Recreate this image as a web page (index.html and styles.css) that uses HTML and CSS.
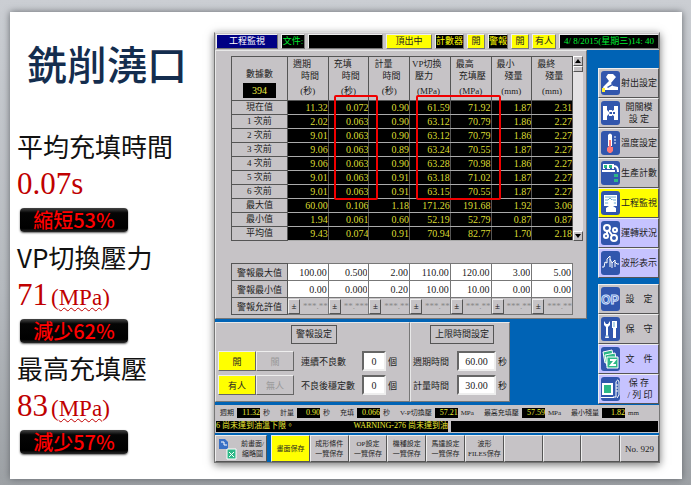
FILE: index.html
```
<!DOCTYPE html>
<html lang="zh-Hant">
<head>
<meta charset="utf-8">
<title>銑削澆口</title>
<link rel="stylesheet" href="styles.css">
</head>
<body>
<main class="slide">
  <section class="summary">
    <h1>銑削澆口</h1>
    <h2>平均充填時間</h2>
    <p class="value">0.07s</p>
    <p class="pill">縮短53%</p>
    <h2>VP切換壓力</h2>
    <p class="value">71<small>(<span class="wavy">MPa</span>)</small></p>
    <p class="pill">減少62%</p>
    <h2>最高充填壓</h2>
    <p class="value">83<small>(<span class="wavy">MPa</span>)</small></p>
    <p class="pill">減少57%</p>
  </section>

  <section class="screen">
    <header class="topbar">
      <span class="navy">工程監視</span>
      <span class="file">文件:</span>
      <span class="file-name"></span>
      <span class="lit eject">頂出中</span>
      <span class="dark counter">計數器</span>
      <span class="lit">開</span>
      <span class="dark">警報</span>
      <span class="lit">開</span>
      <span class="lit manned">有人</span>
      <time class="clock">4/ 8/2015(星期三)14: 40</time>
    </header>

    <div class="middle">
      <div class="work">
        <div class="panel monitor">
          <div class="data">
            <div class="table-wrap">
              <table class="log">
                <thead>
                  <tr>
                    <th class="first">數據數<b>394</b></th>
                    <th>週期<i>時間</i><em>(秒)</em></th>
                    <th>充填<i>時間</i><em>(秒)</em></th>
                    <th>計量<i>時間</i><em>(秒)</em></th>
                    <th>VP切換<i>壓力</i><em>(MPa)</em></th>
                    <th>最高<i>充填壓</i><em>(MPa)</em></th>
                    <th>最小<i>殘量</i><em>(mm)</em></th>
                    <th>最終<i>殘量</i><em>(mm)</em></th>
                  </tr>
                </thead>
                <tbody>
                  <tr><th>現在值</th><td>11.32</td><td>0.072</td><td>0.90</td><td>61.59</td><td>71.92</td><td>1.87</td><td>2.31</td></tr>
                  <tr><th>1 次前</th><td>2.02</td><td>0.063</td><td>0.90</td><td>63.12</td><td>70.79</td><td>1.86</td><td>2.27</td></tr>
                  <tr><th>2 次前</th><td>9.01</td><td>0.063</td><td>0.90</td><td>63.12</td><td>70.79</td><td>1.86</td><td>2.27</td></tr>
                  <tr><th>3 次前</th><td>9.06</td><td>0.063</td><td>0.89</td><td>63.24</td><td>70.55</td><td>1.87</td><td>2.27</td></tr>
                  <tr><th>4 次前</th><td>9.06</td><td>0.063</td><td>0.90</td><td>63.28</td><td>70.98</td><td>1.86</td><td>2.27</td></tr>
                  <tr><th>5 次前</th><td>9.01</td><td>0.063</td><td>0.91</td><td>63.18</td><td>71.02</td><td>1.87</td><td>2.27</td></tr>
                  <tr><th>6 次前</th><td>9.01</td><td>0.063</td><td>0.91</td><td>63.15</td><td>70.55</td><td>1.87</td><td>2.27</td></tr>
                  <tr><th>最大值</th><td>60.00</td><td>0.106</td><td>1.18</td><td>171.26</td><td>191.68</td><td>1.92</td><td>3.06</td></tr>
                  <tr><th>最小值</th><td>1.94</td><td>0.061</td><td>0.60</td><td>52.19</td><td>52.79</td><td>0.87</td><td>0.87</td></tr>
                  <tr><th>平均值</th><td>9.43</td><td>0.074</td><td>0.91</td><td>70.94</td><td>82.77</td><td>1.70</td><td>2.18</td></tr>
                </tbody>
              </table>
              <div class="mark mark-time"></div>
              <div class="mark mark-pressure"></div>
            </div>
            <div class="scroll">
              <button aria-label="上"><svg viewBox="0 0 8 8"><path d="M4 2 7 6H1z"/></svg></button>
              <span class="thumb"></span>
              <button class="down" aria-label="下"><svg viewBox="0 0 8 8"><path d="M4 6 7 2H1z"/></svg></button>
            </div>
          </div>
          <table class="limits">
            <tr><th>警報最大值</th>
              <td><input aria-label="週期最大" value="100.00"></td><td><input aria-label="充填最大" value="0.500"></td><td><input aria-label="計量最大" value="2.00"></td><td><input aria-label="切換最大" value="110.00"></td><td><input aria-label="充填壓最大" value="120.00"></td><td><input aria-label="最小殘量最大" value="3.00"></td><td><input aria-label="最終殘量最大" value="5.00"></td></tr>
            <tr><th>警報最小值</th>
              <td><input aria-label="週期最小" value="0.00"></td><td><input aria-label="充填最小" value="0.000"></td><td><input aria-label="計量最小" value="0.20"></td><td><input aria-label="切換最小" value="10.00"></td><td><input aria-label="充填壓最小" value="10.00"></td><td><input aria-label="最小殘量最小" value="0.00"></td><td><input aria-label="最終殘量最小" value="0.00"></td></tr>
            <tr class="allow"><th>警報允許值</th>
              <td><div><button>±</button><span>***.**</span></div></td><td><div><button>±</button><span>**.***</span></div></td><td><div><button>±</button><span>***.**</span></div></td><td><div><button>±</button><span>***.**</span></div></td><td><div><button>±</button><span>***.**</span></div></td><td><div><button>±</button><span>***.**</span></div></td><td><div><button>±</button><span>***.**</span></div></td></tr>
          </table>
        </div>

        <div class="settings">
          <fieldset class="panel alarm">
            <legend>警報設定</legend>
            <div class="row">
              <button class="key on">開</button><button class="key">關</button>
              <label for="bad">連續不良數</label><input id="bad" value="0"><span>個</span>
            </div>
            <div class="row">
              <button class="key on">有人</button><button class="key">無人</button>
              <label for="stable">不良後穩定數</label><input id="stable" value="0"><span>個</span>
            </div>
          </fieldset>
          <fieldset class="panel limit-time">
            <legend>上限時間設定</legend>
            <div class="row"><label for="cycle">週期時間</label><input id="cycle" value="60.00"><span>秒</span></div>
            <div class="row"><label for="meter">計量時間</label><input id="meter" value="30.00"><span>秒</span></div>
          </fieldset>
        </div>
      </div>

      <nav class="side">
        <button><svg viewBox="0 0 19 24"><path class="w" d="M7 3h5l3 3-5 6 2 3 5 1v3H3l-1-3 6-6-3-4z"/><path class="bl" d="M6 16l5-3 1 1-5 3z"/><path class="y" d="M1 17h3v4H1z"/></svg><span>射出設定</span></button>
        <button><svg viewBox="0 0 19 24"><path class="w" d="M2 5h4v4l3 3-3 3v4H2zM17 5h-4v4l-2 1v4l2 1v4h4z"/><path class="lw" d="M8 10h3M8 14h3"/><path class="bl" d="M12 11h2v2h-2z"/></svg><span>開關模<br>設 定</span></button>
        <button><svg viewBox="0 0 19 24"><path class="w" d="M7 4q2-3 4 0v11H7z"/><path class="r" d="M8 9h2v7h2v4l-2 2H8l-2-2v-3l2-2z"/><path class="thin" d="M13 6h2M13 9h2M13 12h2"/></svg><span>溫度設定</span></button>
        <button><svg viewBox="0 0 19 24"><path class="lw" d="M1 10h13M3 8V4h4v4M8 8V4h4v4M13 5q4 0 4 6"/><path class="g" d="M3 4h3v3H3zM8 4h3v3H8zM13 13h4v3h-4zM13 18h4v3h-4z"/></svg><span>生產計數</span></button>
        <button class="yellow"><svg viewBox="0 0 19 24"><path class="w" d="M3 4h13v11H3z"/><path class="lb" d="M4 6h11M4 9h3l2-2 2 2h4M4 12h11"/><path class="w" d="M8 9h4l1 3-1 3 3 2v4H5v-4l3-2-1-3z"/></svg><span>工程監視</span></button>
        <button class="lilac"><svg viewBox="0 0 19 24"><circle class="ring" cx="6" cy="7" r="3"/><circle class="ring" cx="14" cy="9" r="2"/><circle class="ring" cx="5" cy="15" r="2"/><circle class="ring" cx="13" cy="17" r="3"/><path class="lw" d="M8 10l3 4M6 10v3"/></svg><span>運轉狀況</span></button>
        <button class="lilac"><svg viewBox="0 0 19 24"><path class="thin" d="M1 16h2l1-5 2 1V8l3-3v11M9 8l2 4v5M11 12l3-3v7M14 11l2 2h2"/></svg><span>波形表示</span></button>
        <button class="gap"><svg viewBox="0 0 19 24"><text x="9" y="17">OP</text></svg><span>設&emsp;定</span></button>
        <button><svg viewBox="0 0 19 24"><path class="w" d="M3 4v4l2 2v8l-1 3h4l-1-3v-8l2-2V4L7 7H5zM11 4h5v7h-1v10h-3V11h-1z"/><path class="lb" d="M13 5v5M5 19h2"/></svg><span>保&emsp;守</span></button>
        <button class="lilac"><svg viewBox="0 0 19 24"><path class="g edge" d="M2 5l9-2 2 11-9 2z"/><path class="g edge" d="M4 8l10-2 2 11-10 2z"/><path class="g edge" d="M6 10h11v11H6z"/><path class="lw" d="M9 13h5l-4 5h5"/></svg><span>文&emsp;件</span></button>
        <button class="lilac"><svg viewBox="0 0 19 24"><path class="w" d="M1 6h11v12H1zM0 20h13v1H0z"/><path class="g" d="M3 8h7v8H3z"/><path class="thin" d="M12 20h3V5q2-4 3 0v13l-2 3M15 8h2M15 11h2M15 14h2"/></svg><span>保 存<br>&nbsp;/ 列 印</span></button>
      </nav>
    </div>

    <div class="status">
      <span>週期<b>11.32</b>秒</span><span>計量<b>0.90</b>秒</span><span>充填<b>0.066</b>秒</span><span>V-P切換壓<b>57.21</b>MPa</span><span>最高充填壓<b>57.59</b>MPa</span><span>最小殘量<b>1.82</b>mm</span>
    </div>
    <div class="warning"><p><span>6 尚未達到油溫下限。</span><span>WARNING-276 尚未達到油</span></p><p></p></div>
    <footer class="keys">
      <button class="page"><svg viewBox="0 0 19 24"><path class="sheet" d="M1 2h6l3 3v7H1z"/><path class="thin" d="M3 5h3v3h3"/><path class="g edge" d="M9 12h9v10H9z"/><path class="thin" d="M11 15l5 5M16 15l-5 5"/></svg><span>前畫面/<br>縮略圖</span></button>
      <div class="soft">
        <button class="yellow">畫面保存</button>
        <button>成形條件<br>一覽保存</button>
        <button>OP設定<br>一覽保存</button>
        <button>機種設定<br>一覽保存</button>
        <button>馬達設定<br>一覽保存</button>
        <button>波形<br>FILES保存</button>
        <button aria-label="空"></button><button aria-label="空"></button><button aria-label="空"></button>
        <button class="number">No. 929</button>
      </div>
    </footer>
  </section>
</main>
</body>
</html>
```
FILE: styles.css
```
* { box-sizing: border-box; }

body {
  margin: 0;
  min-height: 100vh;
  padding: 12px 9px 8px 10px;
  display: flex;
  background: linear-gradient(#cbced3, #b6babf 60%, #9da1a5);
  font-family: "Liberation Serif", "Noto Sans CJK TC", serif;
  font-size: 9px;
  color: #222;
}

h1, h2, p { margin: 0; font-weight: 400; }
button, input { font: inherit; color: inherit; border-radius: 0; margin: 0; padding: 0; min-width: 0; }

.slide {
  flex: 1;
  display: grid;
  grid-template-columns: 204px minmax(0, 1fr);
  align-items: start;
  padding: 20px 22px 16px 0;
  background: #fff;
  box-shadow: 0 0 7px #63676c;
}

/* Summary column */
.summary { padding-left: 7px; font-family: "Noto Sans CJK TC", sans-serif; color: #111; }
.summary h1 {
  padding-left: 10px;
  margin: 2px 0 36px;
  font-size: 40px;
  font-weight: 500;
  line-height: 58px;
  color: #142d4e;
}
.summary h2 { font-size: 26px; line-height: 36px; white-space: nowrap; }
.value {
  font-family: "Liberation Serif", serif;
  font-size: 31px;
  line-height: 39px;
  color: #c00000;
}
.value small { margin-left: 3px; font-size: 23px; line-height: 1; }
.wavy { text-decoration: underline wavy #c00000 1px; text-underline-offset: 2px; }
.pill {
  width: 108px;
  height: 24px;
  margin: 5px 0 7px 3px;
  border-radius: 4px;
  background: linear-gradient(#454545, #050505 20%, #000 85%, #2a2a2a);
  box-shadow: 0 1px 2px #666;
  color: #f00;
  font-size: 20px;
  font-weight: 500;
  line-height: 24px;
  text-align: center;
}

/* Machine screen */
.screen {
  background: #0063b5;
  border: 1px solid #777;
  border-top-color: #ddd;
  box-shadow: 0 2px 8px #777;
}

.topbar {
  display: flex;
  gap: 3px;
  height: 17px;
  padding: 1px 0 1px 1px;
  background: #c6c3c6;
  line-height: 13px;
  text-align: center;
  white-space: nowrap;
}
.topbar > * { flex: 0 0 18px; border: 1px solid; border-color: #eee #777 #777 #eee; }
.topbar .navy { flex-basis: 62px; background: #000084; color: #fff; }
.topbar .file { flex-basis: 24px; background: #000; color: #0e3; }
.topbar .file-name { flex: 1; background: #000; }
.lit { background: #ff0; }
.topbar .eject { flex-basis: 46px; }
.topbar .dark { flex-basis: 20px; background: #000; color: #ff0; }
.topbar .counter { flex-basis: 29px; }
.topbar .manned { flex-basis: 24px; }
.topbar .clock { flex-basis: 100px; background: #000; color: #0e3; }

.middle { display: grid; grid-template-columns: minmax(0, 1fr) 61px; gap: 11px; padding-bottom: 1px; }

.panel {
  background: #c6c3c6;
  border: 1px solid;
  border-color: #e8e8e8 #777 #777 #e8e8e8;
}
.monitor { padding: 5px 3px 3px 15px; }
.data { display: flex; }
.table-wrap { position: relative; flex: 1; }

table { width: 100%; table-layout: fixed; border-collapse: collapse; }
th, td { padding: 0; border: 1px solid #555; font-weight: 400; white-space: nowrap; overflow: hidden; }

.log th:first-child, .limits th { width: 56px; }
.log thead th { height: 44px; padding: 1px 0 0 5px; line-height: 12px; text-align: left; vertical-align: top; }
.log th i { display: block; padding-left: 8px; font-style: normal; }
.log th:nth-child(5) i, .log th:nth-child(6) i { padding-left: 3px; }
.log th em { display: block; padding: 3px 5px 0 0; font-style: normal; text-align: center; }
.log thead th:nth-child(5) { padding-left: 2px; }
.log thead th.first { padding: 11px 11px 0; text-align: center; }
.log b { display: block; margin-top: 3px; background: #000; color: #ee4; font-size: 10px; font-weight: 400; line-height: 15px; }
.log tbody tr { height: 14px; }
.log tbody th { line-height: 13px; }
.log td {
  border-color: #aaa #555;
  background: #000;
  color: #dd3;
  font-size: 10px;
  line-height: 13px;
  text-align: right;
}

.mark { position: absolute; top: 39px; height: 105px; border: 2px solid #f00000; border-radius: 2px; }
.mark-time { left: 30%; width: 13%; }
.mark-pressure { left: 54%; width: 25%; }

.scroll { display: flex; flex-direction: column; width: 10px; background: #e4e2e4; }
.scroll button, .thumb { height: 10px; border: 1px solid; border-color: #fff #555 #555 #fff; background: #c6c3c6; }
.scroll button { line-height: 0; }
.scroll svg { width: 8px; height: 8px; }
.thumb { height: 6px; }
.scroll .down { margin-top: auto; }

.limits { width: calc(100% - 10px); margin-top: 22px; }
.limits tr { height: 17px; }
.limits td { border-color: #777; }
.limits input {
  display: block;
  width: 100%;
  height: 16px;
  padding-right: 1px;
  border: 0;
  background: #fff;
  font-size: 10px;
  text-align: right;
}
.limits .allow div { display: flex; height: 15px; color: #888; line-height: 15px; }
.allow button { flex: 0 0 12px; border: 1px solid; border-color: #eee #555 #555 #eee; background: #c6c3c6; color: #111; line-height: 12px; }
.allow span { flex: 1; font-size: 9px; text-align: right; }

.settings { display: grid; grid-template-columns: 195px 100px; margin-top: 3px; }
fieldset { min-width: 0; margin: 0; padding: 2px 2px 2px; }
legend { float: left; margin: 0 0 7px 73px; padding: 0 4px; border: 1px solid #555; line-height: 17px; }
.limit-time legend { margin-left: 17px; }
.row { clear: both; display: flex; align-items: center; height: 20px; margin-bottom: 4px; white-space: nowrap; }
.row label { flex: 1; }
.row input {
  width: 24px;
  height: 20px;
  margin-right: 2px;
  border: 2px solid;
  border-color: #666 #eee #eee #666;
  background: #fff;
  font-size: 10px;
  text-align: center;
}
.alarm .row span { width: 19px; }
.limit-time .row input { width: 39px; }
.key { flex: 0 0 38px; height: 20px; border: 1px solid; border-color: #eee #666 #666 #eee; background: #c6c3c6; color: #999; }
.key + .key { margin-right: 7px; }
.key.on { background: #ff0; color: #222; }

/* Side menu */
.side { padding-top: 18px; }
.side button {
  display: flex;
  align-items: center;
  width: 100%;
  height: 30px;
  padding-left: 2px;
  border: 1px solid;
  border-color: #eee #555 #555 #eee;
  background: #c6c3c6;
  line-height: 12px;
}
.side svg { flex: 0 0 19px; height: 24px; border-radius: 3px; background: #3156ad; }
.side span { flex: 1; text-align: center; white-space: nowrap; }
.side .yellow, .soft .yellow { background: #ff0; }
.side .lilac { background: #c6c3ff; }
.side .gap { margin-top: 6px; }

.w { fill: #fff; }
.bl { fill: #3156ad; }
.y { fill: #fe3; }
.r { fill: #f77; }
.g { fill: #2db887; }
.edge { stroke: #fff; stroke-width: 1; }
.sheet { fill: #3971c6; }
.lw, .thin, .ring, .lb { fill: none; stroke: #fff; stroke-width: 2; }
.thin { stroke-width: 1; }
.lb { stroke: #6aaad0; stroke-width: 1; }
svg text { fill: none; stroke: #cfe0ff; stroke-width: 1; font: bold 12px "Liberation Sans", sans-serif; text-anchor: middle; }

/* Bottom rows */
.status {
  display: flex;
  justify-content: space-between;
  height: 15px;
  padding: 0 20px 0 5px;
  background: #c6c3c6;
  font-size: 7px;
  line-height: 14px;
  white-space: nowrap;
}
.status span { display: flex; align-items: center; gap: 3px; }
.status b { width: 23px; background: #000; color: #ee3; font-size: 8px; font-weight: 400; line-height: 10px; text-align: right; }
.warning { display: grid; grid-template-columns: 232px 1fr; height: 13px; background: #c6c3c6; padding: 1px; gap: 3px; }
.warning p { display: flex; justify-content: space-between; background: #000; color: #ee3; font-size: 8px; line-height: 10px; white-space: nowrap; }

.keys { display: flex; gap: 4px; padding-top: 2px; font-size: 7px; line-height: 10px; }
.keys button { height: 27px; border: 1px solid; border-color: #eee #555 #555 #eee; background: #c6c3c6; }
.keys .page { display: flex; flex: 0 0 52px; align-items: center; justify-content: space-between; padding: 0 2px; }
.page svg { width: 19px; height: 24px; }
.soft { flex: 1; display: grid; grid-template-columns: repeat(10, minmax(0, 1fr)); }
.soft button { white-space: nowrap; }
.soft .number { font-size: 9px; }
```
